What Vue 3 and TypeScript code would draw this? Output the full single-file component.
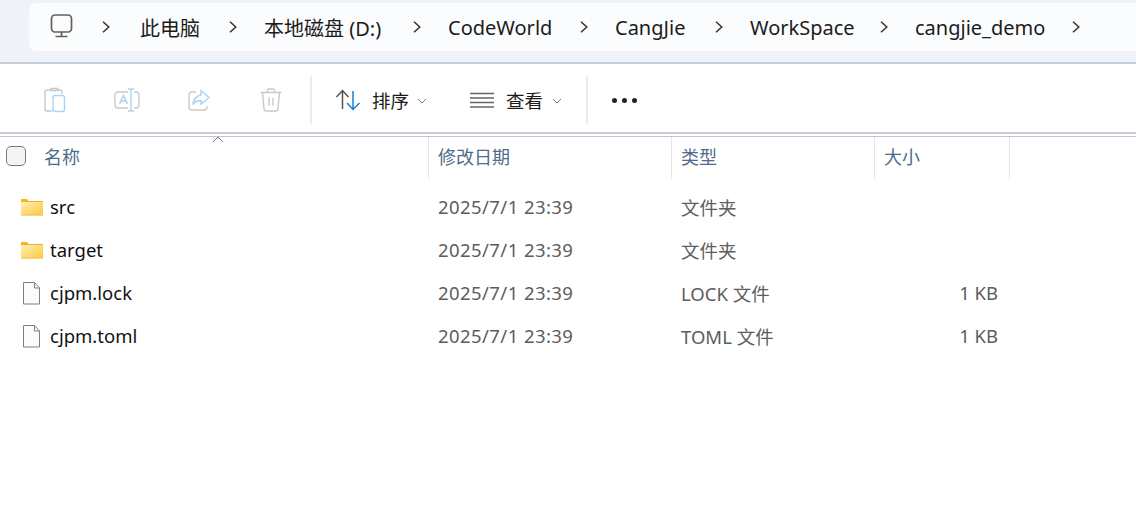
<script setup lang="ts">
interface Row { name: string; kind: 'folder' | 'file'; date: string; type: string; size: string }
const crumbs: { label: string; width: number }[] = [
  { label: '此电脑', width: 124 },
  { label: '本地磁盘 (D:)', width: 184 },
  { label: 'CodeWorld', width: 167 },
  { label: 'CangJie', width: 135 },
  { label: 'WorkSpace', width: 165 },
  { label: 'cangjie_demo', width: 192 }
]
const headers = [
  { label: '修改日期', width: 243 },
  { label: '类型', width: 203 },
  { label: '大小', width: 135 }
]
const rows: Row[] = [
  { name: 'src', kind: 'folder', date: '2025/7/1 23:39', type: '文件夹', size: '' },
  { name: 'target', kind: 'folder', date: '2025/7/1 23:39', type: '文件夹', size: '' },
  { name: 'cjpm.lock', kind: 'file', date: '2025/7/1 23:39', type: 'LOCK 文件', size: '1 KB' },
  { name: 'cjpm.toml', kind: 'file', date: '2025/7/1 23:39', type: 'TOML 文件', size: '1 KB' }
]
</script>

<template>
  <div class="page">
    <div class="top">
      <nav class="address">
        <svg class="pc" width="24" height="24" viewBox="0 0 24 24" fill="none" stroke="#5f5f5f" stroke-width="1.700">
          <rect x="1.500" y="1" width="20" height="17" rx="3.500" />
          <path d="M11.500 18v4M5.500 22.500h12" />
        </svg>
        <svg class="chev first" width="8" height="12" viewBox="0 0 8 12" fill="none" stroke="#333" stroke-width="1.500"><path d="M1 .7 6.800 6 1 11.300" /></svg>
        <div v-for="c in crumbs" :key="c.label" class="crumb" :style="{ width: c.width + 'px' }">
          <span>{{ c.label }}</span>
          <svg class="chev" width="8" height="12" viewBox="0 0 8 12" fill="none" stroke="#333" stroke-width="1.500"><path d="M1 .7 6.800 6 1 11.300" /></svg>
        </div>
      </nav>
    </div>

    <div class="toolbar">
      <div class="disabled-group">
        <svg width="24" height="26" viewBox="0 0 24 26" fill="none" stroke="#c9c9c9" stroke-width="1.400">
          <path d="M8 3H4a2 2 0 0 0-2 2v17a2 2 0 0 0 2 2h5" />
          <path d="M8 3.500V1.500h7v2zM15 3h2a2 2 0 0 1 2 2v2" />
          <rect x="10" y="8.500" width="11.500" height="16" rx="2" stroke="#a9d3f3" />
        </svg>
        <svg width="26" height="24" viewBox="0 0 26 24" fill="none" stroke="#c9c9c9" stroke-width="1.400">
          <path d="M14 4H4a3 3 0 0 0-3 3v10a3 3 0 0 0 3 3h10M20 4h2a3 3 0 0 1 3 3v10a3 3 0 0 1-3 3h-2" />
          <path d="M5.500 16 9.500 7.500 13.500 16M7 13h5" stroke="#a9d3f3" />
          <path d="M14 1h6M17 1v22M14 23h6" stroke="#a9d3f3" />
        </svg>
        <svg width="24" height="24" viewBox="0 0 24 24" fill="none" stroke="#c9c9c9" stroke-width="1.400">
          <path d="M9 4H5a3 3 0 0 0-3 3v12a3 3 0 0 0 3 3h12a3 3 0 0 0 3-3v-1" />
          <path d="M14 2.500 22 9.500l-8 6.500v-3.500c-4 0-6 1-8 4 .5-5 3-8.500 8-9.500z" stroke="#a9d3f3" />
        </svg>
        <svg width="24" height="24" viewBox="0 0 24 24" fill="none" stroke="#c9c9c9" stroke-width="1.400">
          <path d="M1.500 4.500h21M8.500 4.500V2.500a1.500 1.500 0 0 1 1.500-1.500h4a1.500 1.500 0 0 1 1.500 1.500v2" />
          <path d="M3.500 4.500 5 20.500a2.500 2.500 0 0 0 2.500 2.500h9a2.500 2.500 0 0 0 2.500-2.500L20.500 4.500M10 9.500v8M14 9.500v8" />
        </svg>
      </div>
      <div class="sep"></div>
      <div class="actions">
        <button class="action sort">
          <svg width="26" height="22" viewBox="0 0 26 22" fill="none" stroke-width="1.500">
            <path d="M1.500 8 7.500 1.500 13.500 8M7.500 2v18" stroke="#555" />
            <path d="M12 14 18 20.500 24.500 14M18 2v18" stroke="#1a80d4" />
          </svg>
          <span>排序</span>
          <svg class="caret" width="10" height="6" viewBox="0 0 10 6" fill="none" stroke="#777" stroke-width="1"><path d="M1 1l4 4 4-4" /></svg>
        </button>
        <button class="action view">
          <svg width="24" height="16" viewBox="0 0 24 16" fill="none" stroke="#666" stroke-width="1.300">
            <path d="M0 1.500h24M0 6h24M0 10.500h24M0 15h24" />
          </svg>
          <span>查看</span>
          <svg class="caret" width="10" height="6" viewBox="0 0 10 6" fill="none" stroke="#777" stroke-width="1"><path d="M1 1l4 4 4-4" /></svg>
        </button>
      </div>
      <div class="sep"></div>
      <div class="more"><i></i><i></i><i></i></div>
    </div>

    <div class="header">
      <svg class="sort-arrow" width="12" height="7" viewBox="0 0 12 7" fill="none" stroke="#777" stroke-width="1"><path d="M1 6l5-5 5 5" /></svg>
      <div class="h-name">
        <span class="check"></span>
        <span>名称</span>
      </div>
      <div v-for="h in headers" :key="h.label" class="h-cell" :style="{ width: h.width + 'px' }">{{ h.label }}</div>
    </div>

    <div class="list">
      <div v-for="r in rows" :key="r.name" class="row">
        <div class="c-name">
          <svg v-if="r.kind === 'folder'" width="24" height="18" viewBox="0 0 24 18">
            <defs>
              <linearGradient :id="'f' + r.name" x1="0" y1="0" x2="1" y2="1">
                <stop offset="0" stop-color="#ffeeb5" />
                <stop offset="1" stop-color="#fdc93f" />
              </linearGradient>
            </defs>
            <path d="M1 1h6l2 2.500H1z" fill="#f8b616" />
            <rect x="1" y="3" width="22" height="14.500" fill="#efb021" />
            <rect x="1" y="4" width="22" height="12.800" :fill="'url(#f' + r.name + ')'" />
          </svg>
          <svg v-else width="24" height="24" viewBox="0 0 24 24" fill="#fbfbfb" stroke="#7f7f7f" stroke-width="1">
            <path d="M3.500 1.500h11l5 5.500v16h-16z" />
            <path d="M14.500 1.500V7h5" fill="none" />
          </svg>
          <span>{{ r.name }}</span>
        </div>
        <div class="c-date">{{ r.date }}</div>
        <div class="c-type">{{ r.type }}</div>
        <div class="c-size">{{ r.size }}</div>
      </div>
    </div>
  </div>
</template>

<style>
html, body { margin: 0; background: #fff; overflow: hidden; }
</style>

<style scoped>
.page {
  width: 1136px;
  height: 530px;
  background: #fff;
  overflow: hidden;
  font-family: "Noto Sans", "Noto Sans CJK SC", sans-serif;
  font-size: 18.5px;
}
svg { flex: none; display: block; }
.top {
  height: 64px;
  box-sizing: border-box;
  padding: 3px 0 0 29px;
  background: #eff3f9;
  border-bottom: 2px solid #c3cedd;
}
.address {
  height: 48px;
  background: #fbfcfe;
  border-radius: 8px 0 0 8px;
  display: flex;
  align-items: center;
  padding-left: 21px;
  color: #1b1b1b;
  font-size: 20px;
}
.pc { margin-top: -2px; }
.chev.first { margin: 0 30px 0 28px; }
.crumb {
  display: flex;
  align-items: center;
  justify-content: space-between;
  box-sizing: border-box;
  padding-right: 27px;
  white-space: nowrap;
  flex: none;
}
.toolbar {
  height: 68px;
  box-sizing: border-box;
  padding-top: 4px;
  display: flex;
  align-items: center;
}
.disabled-group {
  display: grid;
  grid-template-columns: repeat(4, 72px);
  justify-items: center;
  align-items: center;
  padding-left: 19px;
  width: 310px;
  box-sizing: border-box;
  flex: none;
}
.sep { width: 2px; height: 48px; background: #ececec; flex: none; }
.actions { display: flex; align-items: center; }
.action {
  display: flex;
  align-items: center;
  background: none;
  border: 0;
  padding: 0;
  color: #1b1b1b;
  font: inherit;
  font-size: 18.5px;
}
.sort { width: 135px; margin-left: 23px; }
.sort span { margin-left: 11px; }
.sort .caret { margin-left: 8px; margin-top: 2px; }
.view { width: 116px; }
.view span { margin-left: 12px; }
.view .caret { margin-left: 9px; margin-top: 2px; }
.more { display: flex; gap: 5px; margin-left: 24px; }
.more i { width: 5px; height: 5px; border-radius: 50%; background: #222; display: block; }
.header {
  position: relative;
  height: 47px;
  box-sizing: border-box;
  border-top: 2px solid #c3cedd;
  display: flex;
  color: #4e6c8c;
  font-size: 18px;
}
.header::before {
  content: "";
  position: absolute;
  left: 0;
  right: 0;
  top: 2px;
  height: 1px;
  background: #c4c4c4;
}
.sort-arrow { position: absolute; left: 212px; top: 2px; }
.h-name {
  width: 429px;
  flex: none;
  box-sizing: border-box;
  display: flex;
  align-items: center;
  padding: 0 0 4px 6px;
  gap: 18px;
  border-right: 1px solid #e5e5e5;
  margin-top: 3px;
}
.check {
  width: 18px;
  height: 18px;
  border: 1px solid #7a7a7a;
  border-radius: 5px;
  background: #f4f4f4;
  flex: none;
}
.h-cell {
  flex: none;
  box-sizing: border-box;
  padding: 0 0 4px 9px;
  margin-top: 3px;
  display: flex;
  align-items: center;
  border-right: 1px solid #e5e5e5;
}
.list { padding-top: 6px; }
.row { height: 43px; display: flex; align-items: center; }
.c-name {
  width: 438px;
  flex: none;
  box-sizing: border-box;
  padding-left: 20px;
  display: flex;
  align-items: center;
  gap: 6px;
  color: #111;
}
.c-date { width: 243px; flex: none; color: #5d5d5d; letter-spacing: 0.43px; }
.c-type { width: 203px; flex: none; color: #5d5d5d; }
.c-size { width: 114px; flex: none; text-align: right; color: #5d5d5d; }
</style>
